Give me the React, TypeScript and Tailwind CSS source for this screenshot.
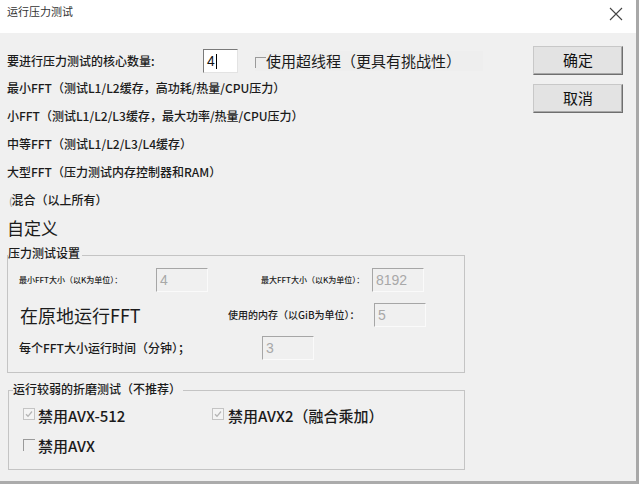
import React from "react";

const font = { fontFamily: '"Noto Sans CJK SC", "Noto Sans", sans-serif' };

function Sunken({ value, enabled = false, w = 52 }: { value: string; enabled?: boolean; w?: number }) {
  return (
    <div
      className={
        "h-[24px] flex items-center pl-[3px] border-t border-l border-b border-r text-[14px] leading-none font-normal " +
        (enabled
          ? "bg-white border-t-[#7a7a7a] border-l-[#7a7a7a] border-b-[#e3e3e3] border-r-[#e3e3e3] text-[#111]"
          : "bg-[#f0f0f0] border-t-[#a6a6a6] border-l-[#a6a6a6] border-b-[#fafafa] border-r-[#fafafa] text-[#a8a8a8]")
      }
      style={{ width: w, fontFamily: '"Liberation Sans", Arial, sans-serif' }}
    >
      {value}
      {enabled && <span className="inline-block w-px h-[15px] bg-black ml-[1px]" />}
    </div>
  );
}

function Check({ checked }: { checked?: boolean }) {
  if (checked) {
    return (
      <div className="w-[12px] h-[12px] border border-[#c4c4c4] bg-[#f4f4f4] flex items-center justify-center shrink-0">
        <svg width="8" height="8" viewBox="0 0 8 8">
          <path d="M1 4.2 L3 6.3 L7 1.5" fill="none" stroke="#b5b5b5" strokeWidth="1.3" />
        </svg>
      </div>
    );
  }
  return <div className="w-[12px] h-[12px] border-t border-l border-[#9a9a9a] shrink-0" />;
}

function Button({ label }: { label: string }) {
  return (
    <div className="w-[90px] h-[29px] bg-[#e3e3e3] border border-t-[#c8c8c8] border-l-[#c8c8c8] border-r-[#6f6f6f] border-b-[#6f6f6f] shadow-[inset_-1px_-1px_0_#a8a8a8] flex items-center justify-center text-[15px] text-[#111] font-normal">
      {label}
    </div>
  );
}

export default function App() {
  return (
    <div
      className="w-[639px] h-[484px] bg-[#f0f0f0] border-r-[3px] border-b-[3px] border-r-[#a8a8a8] border-b-[#ababab] flex flex-col text-[#1b1b1b] overflow-hidden font-medium"
      style={font}
    >
      {/* title bar */}
      <div className="h-[33px] bg-white flex items-start justify-between shrink-0">
        <div className="pl-[7px] pt-[3px] text-[11px] leading-[16px] text-[#333] font-normal">运行压力测试</div>
        <div className="pt-[7px] pr-[13px]">
          <svg width="14" height="14" viewBox="0 0 14 14">
            <path d="M1 1 L13 13 M13 1 L1 13" stroke="#444" strokeWidth="1.1" />
          </svg>
        </div>
      </div>

      {/* body */}
      <div className="flex flex-1 pt-[13px]">
        <div className="w-[526px] flex flex-col">
          {/* row 1 */}
          <div className="flex items-center h-[24px] mt-[3px]">
            <div className="pl-[7px] w-[203px] text-[12px]">要进行压力测试的核心数量:</div>
            <Sunken value="4" enabled w={35} />
            <div className="ml-[17px] flex items-center bg-[#eeeeee] pr-[22px] font-normal">
              <div className="w-[11px] h-[11px] border-t border-l border-[#9a9a9a] mt-[2px]" />
              <span className="text-[15px] leading-[20px]">使用超线程（更具有挑战性）</span>
            </div>
          </div>
          <div className="h-[28px] flex items-center pl-[7px] text-[12px] mt-[1px]">
            最小FFT（测试L1/L2缓存，高功耗/热量/CPU压力）
          </div>
          <div className="h-[28px] flex items-center pl-[7px] text-[12px]">
            小FFT（测试L1/L2/L3缓存，最大功率/热量/CPU压力）
          </div>
          <div className="h-[28px] flex items-center pl-[7px] text-[12px]">中等FFT（测试L1/L2/L3/L4缓存）</div>
          <div className="h-[28px] flex items-center pl-[7px] text-[12px]">大型FFT（压力测试内存控制器和RAM）</div>
          <div className="h-[28px] flex items-center pl-[9px] text-[12px]">
            <span className="text-[#a0a0a0] text-[10px] mr-[-1px]">(</span>混合（以上所有）
          </div>
          <div className="h-[28px] flex items-center pl-[7px] text-[17px] font-normal">自定义</div>

          {/* group 1 */}
          <div className="relative mt-[13px] ml-[7px] w-[458px] h-[118px] border border-[#c4c4c4] flex flex-col">
            <span className="absolute left-0 top-[-11px] bg-[#f0f0f0] text-[12px] leading-[16px] pr-[2px]">
              压力测试设置
            </span>
            <div className="flex items-center mt-[12px] h-[24px]">
              <div className="pl-[11px] w-[148px] text-[8px] leading-none">最小FFT大小（以K为单位）：</div>
              <Sunken value="4" />
              <div className="ml-[53px] w-[111px] text-[8px] leading-none">最大FFT大小（以K为单位）：</div>
              <Sunken value="8192" />
            </div>
            <div className="flex items-center mt-[11px] h-[24px]">
              <div className="pl-[12px] w-[220px] text-[18px] leading-none font-normal">在原地运行FFT</div>
              <div className="w-[146px] text-[10px] leading-none">使用的内存（以GiB为单位）：</div>
              <Sunken value="5" />
            </div>
            <div className="flex items-center mt-[9px] h-[24px]">
              <div className="pl-[11px] w-[254px] text-[12px] leading-none">每个FFT大小运行时间（分钟）；</div>
              <Sunken value="3" />
            </div>
          </div>

          {/* group 2 */}
          <div className="relative mt-[17px] ml-[8px] w-[457px] h-[80px] border border-[#c4c4c4] flex flex-col">
            <span className="absolute left-[4px] top-[-10px] bg-[#f0f0f0] text-[12px] leading-[16px] pr-[2px]">
              运行较弱的折磨测试（不推荐）
            </span>
            <div className="flex items-center mt-[12px] h-[22px]">
              <div className="pl-[14px] w-[203px] flex items-center">
                <Check checked />
                <span className="ml-[3px] text-[15px] leading-[20px] mt-[4px]">禁用AVX-512</span>
              </div>
              <Check checked />
              <span className="ml-[4px] text-[15px] leading-[20px] mt-[4px]">禁用AVX2（融合乘加）</span>
            </div>
            <div className="flex items-center mt-[9px] h-[22px] pl-[14px]">
              <Check />
              <span className="ml-[3px] text-[15px] leading-[20px] mt-[2px]">禁用AVX</span>
            </div>
          </div>
        </div>

        {/* buttons */}
        <div className="flex flex-col ml-[7px] gap-[9px]">
          <Button label="确定" />
          <Button label="取消" />
        </div>
      </div>
    </div>
  );
}
